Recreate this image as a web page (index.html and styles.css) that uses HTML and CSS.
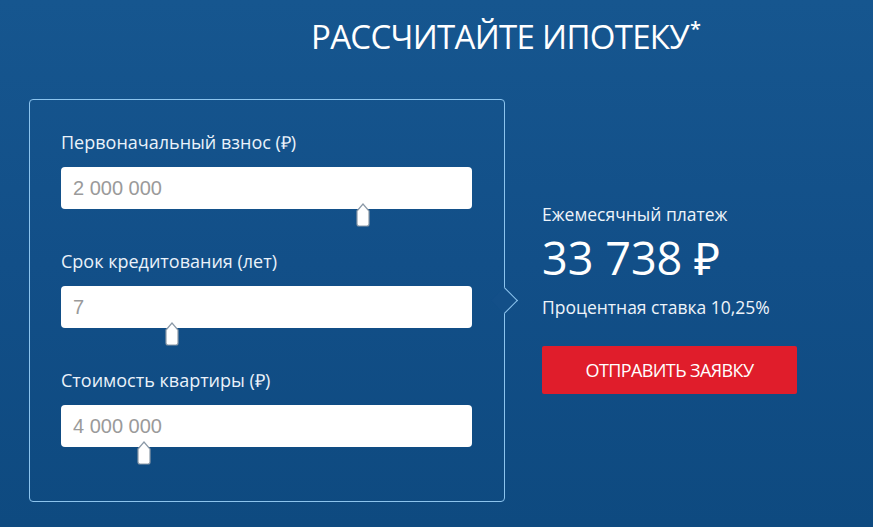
FILE: index.html
```html
<!DOCTYPE html>
<html lang="ru">

<head>
    <meta charset="UTF-8">
    <meta name="viewport" content="width=device-width, initial-scale=1.0">
    <title>Рассчитайте ипотеку</title>
    <link rel="stylesheet" href="styles.css">
</head>

<body>

    <!-- Header -->
    <header class="calc-header">
        <h1>РАССЧИТАЙТЕ ИПОТЕКУ<sup>*</sup></h1>
    </header>

    <!-- Calculator -->
    <div class="calc">
        <div class="calc-form">
            <div class="field">
                <label>Первоначальный взнос (₽)</label>
                <input type="text" placeholder="2 000 000">
                <span class="handle handle-first">
                    <svg width="14" height="25" viewBox="0 0 14 25"><path d="M1 9 L7 2 L13 9 L13 22 Q13 24 11 24 L3 24 Q1 24 1 22 Z" fill="#fff" stroke="#8c9aa8" stroke-width="1.2"/></svg>
                </span>
            </div>
            <div class="field">
                <label>Срок кредитования (лет)</label>
                <input type="text" placeholder="7">
                <span class="handle handle-second">
                    <svg width="14" height="25" viewBox="0 0 14 25"><path d="M1 9 L7 2 L13 9 L13 22 Q13 24 11 24 L3 24 Q1 24 1 22 Z" fill="#fff" stroke="#8c9aa8" stroke-width="1.2"/></svg>
                </span>
            </div>
            <div class="field">
                <label>Стоимость квартиры (₽)</label>
                <input type="text" placeholder="4 000 000">
                <span class="handle handle-third">
                    <svg width="14" height="25" viewBox="0 0 14 25"><path d="M1 9 L7 2 L13 9 L13 22 Q13 24 11 24 L3 24 Q1 24 1 22 Z" fill="#fff" stroke="#8c9aa8" stroke-width="1.2"/></svg>
                </span>
            </div>
        </div>

        <div class="calc-result">
            <p class="result-label">Ежемесячный платеж</p>
            <p class="result-sum">33 738 ₽</p>
            <p class="result-rate">Процентная ставка 10,25%</p>
            <button type="button">ОТПРАВИТЬ ЗАЯВКУ</button>
        </div>
    </div>

</body>

</html>
```

FILE: styles.css
```css
* {
    margin: 0;
    padding: 0;
    box-sizing: border-box;
    font-family: "Open Sans", sans-serif;
}

body {
    width: 873px;
    height: 527px;
    overflow: hidden;
    background: linear-gradient(180deg, #16568f 0%, #124f88 50%, #0e4a80 100%);
    color: #fff;
}

/* Header */
.calc-header {
    padding: 12px 0 0 311px;
}

.calc-header h1 {
    font-size: 33px;
    font-weight: 400;
    line-height: 50px;
    letter-spacing: -0.7px;
    color: #fff;
}

.calc-header sup {
    font-size: 20px;
    font-weight: 600;
    position: relative;
    top: -8px;
    vertical-align: top;
    margin-left: 1px;
}

/* Calculator */
.calc {
    display: flex;
    align-items: flex-start;
    padding: 37px 0 0 29px;
}

.calc-form {
    position: relative;
    width: 476px;
    height: 403px;
    border: 1.5px solid #8cc4ee;
    border-radius: 4px;
    padding: 30px 0 0 31px;
}

/* arrow on the right side of the box */
.calc-form::after {
    content: "";
    position: absolute;
    right: -10px;
    top: 191px;
    width: 18px;
    height: 18px;
    background: #134f88;
    border-top: 1.5px solid #8cc4ee;
    border-right: 1.5px solid #8cc4ee;
    transform: rotate(45deg);
}

.field {
    position: relative;
    margin-bottom: 40px;
}

.field label {
    display: block;
    font-size: 18px;
    line-height: 24px;
    color: #eaf2fa;
    margin-bottom: 13px;
}

.field input {
    display: block;
    width: 411px;
    height: 42px;
    border: none;
    border-radius: 4px;
    background: #fff;
    padding: 0 12px;
    font-family: "Liberation Sans", Arial, sans-serif;
    font-size: 20px;
    outline: none;
}

.field input::placeholder {
    color: #9a9a9a;
}

.handle {
    position: absolute;
    top: 72px;
    display: block;
    width: 14px;
    height: 25px;
}

.handle svg {
    display: block;
}

.handle-first {
    left: 295px;
}

.handle-second {
    left: 104px;
}

.handle-third {
    left: 76px;
}

/* Result */
.calc-result {
    margin: 104px 0 0 37px;
    width: 256px;
}

.result-label {
    font-size: 17.5px;
    line-height: 22px;
    color: #eef4fa;
}

.result-sum {
    font-size: 45px;
    line-height: 56px;
    margin: 5px 0 10px 0;
}

.result-rate {
    font-size: 17.5px;
    line-height: 22px;
    color: #eef4fa;
}

button {
    margin-top: 28px;
    width: 255px;
    height: 48px;
    border: none;
    border-radius: 2px;
    background-color: #e01d2b;
    color: #fff;
    font-size: 18px;
    letter-spacing: -0.6px;
    cursor: pointer;
}
```
